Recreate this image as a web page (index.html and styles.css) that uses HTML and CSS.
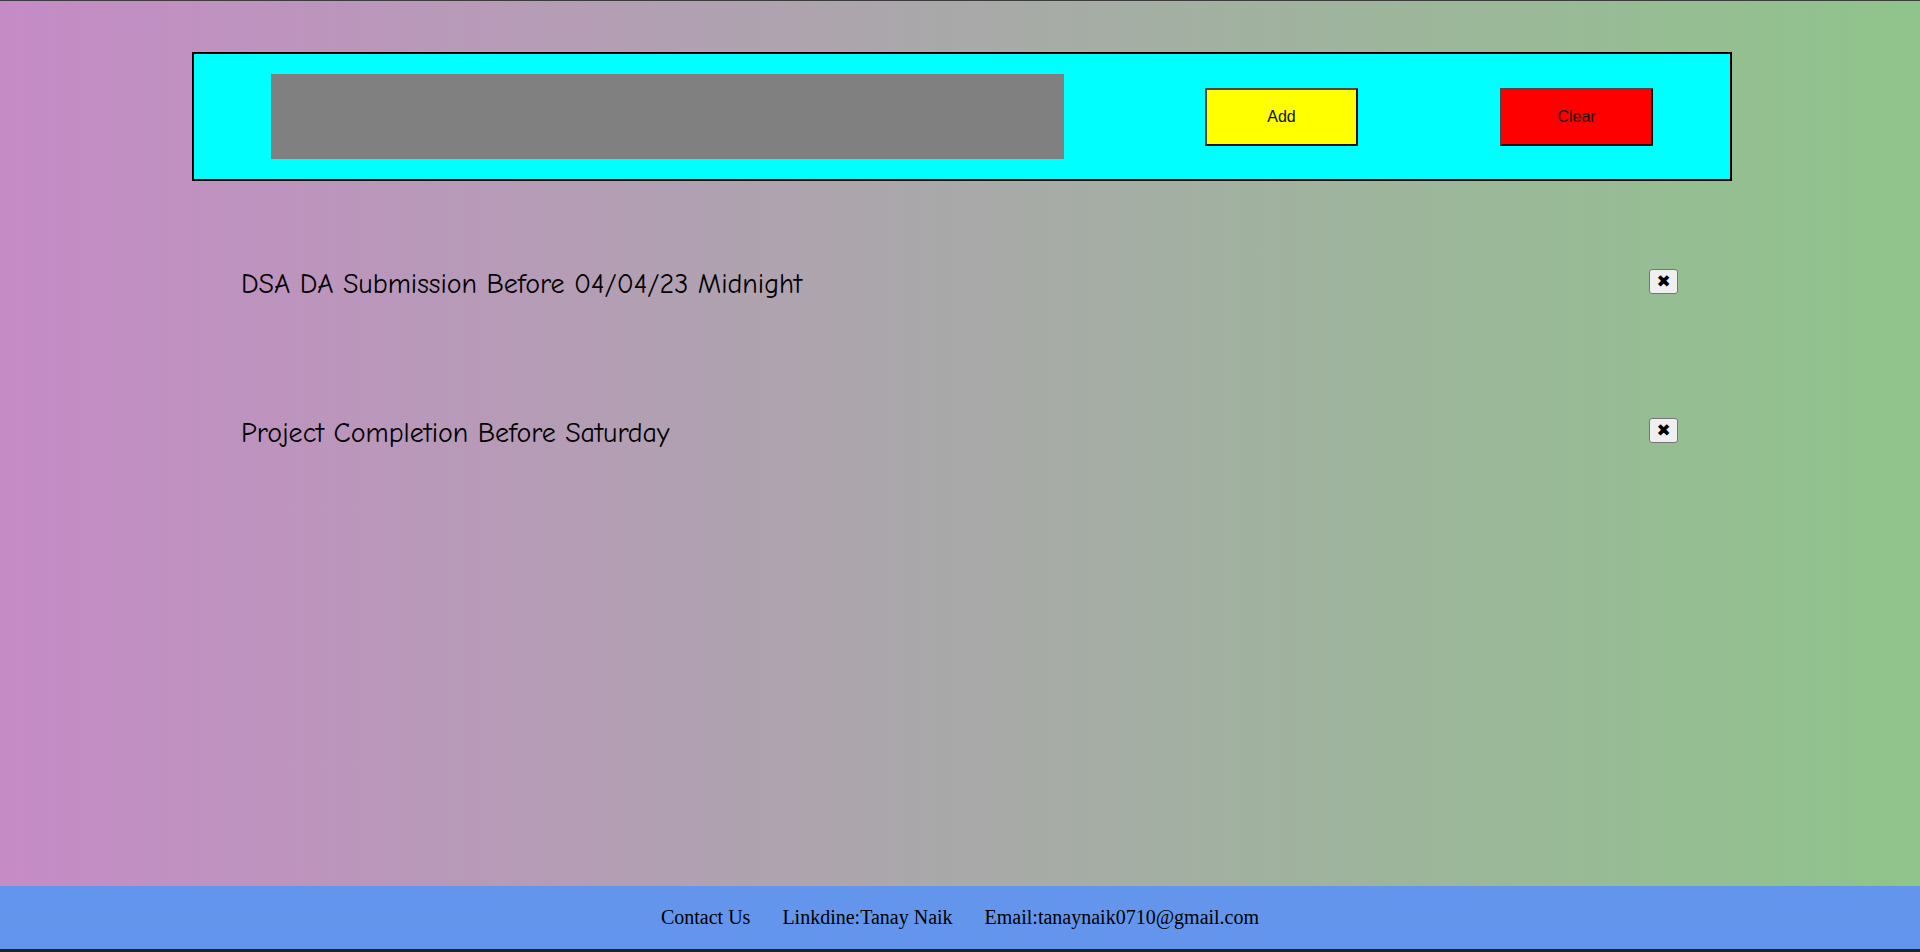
FILE: index.html
```html
<!DOCTYPE html>
<html lang="en">
<head>
<meta charset="utf-8">
<title>To Do List</title>
<link rel="stylesheet" href="styles.css">
</head>
<body>
<div class="page">
  <main class="main">
    <div class="container">
      <div class="input-box">
        <input class="task-input" type="text">
        <button class="btn btn-add">Add</button>
        <button class="btn btn-clear">Clear</button>
      </div>
      <ul class="task-list">
        <li class="task">
          <span class="task-text">DSA DA Submission Before 04/04/23 Midnight</span>
          <button class="del">&#10006;</button>
        </li>
        <li class="task">
          <span class="task-text">Project Completion Before Saturday</span>
          <button class="del">&#10006;</button>
        </li>
      </ul>
    </div>
  </main>
  <footer class="footer">
    <span>Contact Us</span>
    <span>Linkdine:Tanay Naik</span>
    <span>Email:tanaynaik0710@gmail.com</span>
  </footer>
</div>
</body>
</html>
```
FILE: styles.css
```css
* { box-sizing: border-box; }
html, body { margin: 0; padding: 0; height: 100%; }
body {
  background: linear-gradient(to right, #c58bc6 0%, #a9a9a9 50%, #8fc48b 100%);
  font-family: "Liberation Serif", serif;
}
.page {
  min-height: 100vh;
  display: flex;
  flex-direction: column;
  border-top: 1px solid #3c3c3c;
}
.main { flex: 1; }
.container {
  width: 1540px;
  margin-left: 192px;
  padding-top: 51px;
}
.input-box {
  background: #00ffff;
  border: 2px solid #000;
  height: 129px;
  display: flex;
  align-items: center;
  padding: 0 0 0 77px;
}
.task-input {
  width: 793px;
  height: 85px;
  background: #808080;
  border: none;
  outline: none;
  margin: 0;
  padding: 0;
}
.btn {
  width: 153px;
  height: 58px;
  border-width: 2px;
  border-style: solid;
  border-color: #4a4a4a #111 #111 #4a4a4a;
  font-family: "Liberation Sans", Arial, sans-serif;
  font-size: 16px;
  color: #111;
  padding: 0;
}
.btn-add { background: #ffff00; margin-left: 141px; }
.btn-clear { background: #ff0000; margin-left: 142px; }
.task-list {
  list-style: none;
  margin: 0;
  padding: 72px 54px 0 49px;
  display: flex;
  flex-direction: column;
  gap: 89px;
}
.task {
  height: 60px;
  display: flex;
  align-items: center;
  justify-content: space-between;
}
.task-text {
  font-family: "Comic Sans MS", "Comic Neue", "Open Sans", sans-serif;
  font-size: 28px;
  color: #000;
  margin-top: 2px;
}
.del {
  width: 29px;
  height: 25px;
  padding: 0;
  margin-top: -4px;
  background: #efefef;
  border: 1px solid #767676;
  border-radius: 3px;
  font-family: "DejaVu Sans", sans-serif;
  font-size: 17px;
  font-weight: bold;
  line-height: 1;
  color: #000;
  display: flex;
  align-items: center;
  justify-content: center;
}
.footer {
  height: 66px;
  background: #6495ed;
  border-bottom: 3px solid #222;
  display: flex;
  justify-content: center;
  align-items: center;
  gap: 32px;
  font-family: "Liberation Serif", serif;
  font-size: 20px;
  color: #000;
}
```
